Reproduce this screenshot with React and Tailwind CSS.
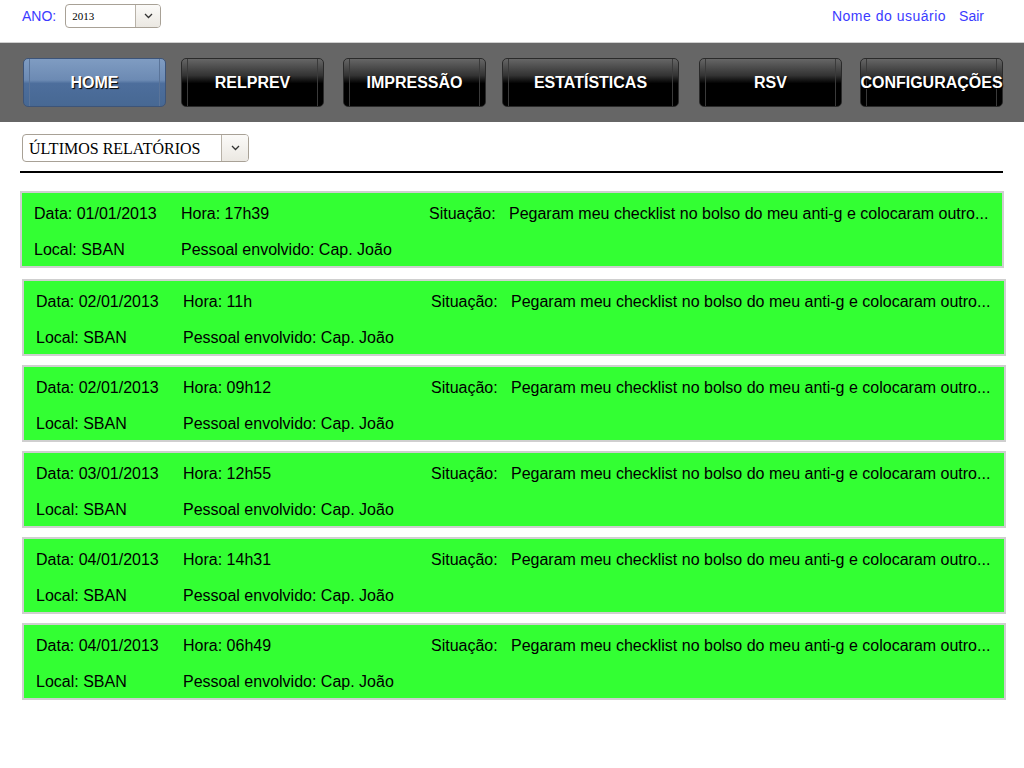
const MENU = [
  { label: "HOME", active: true, w: "w-[143px]", ml: "" },
  { label: "RELPREV", w: "w-[143px]", ml: "ml-[15px]" },
  { label: "IMPRESSÃO", w: "w-[143px]", ml: "ml-[19px]" },
  { label: "ESTATÍSTICAS", w: "w-[177px]", ml: "ml-[16px]" },
  { label: "RSV", w: "w-[143px]", ml: "ml-[20px]" },
  { label: "CONFIGURAÇÕES", w: "w-[143px]", ml: "ml-[18px]" },
]

const REPORTS = [
  { data: "01/01/2013", hora: "17h39" },
  { data: "02/01/2013", hora: "11h" },
  { data: "02/01/2013", hora: "09h12" },
  { data: "03/01/2013", hora: "12h55" },
  { data: "04/01/2013", hora: "14h31" },
  { data: "04/01/2013", hora: "06h49" },
]

function Chevron() {
  return (
    <svg width="9" height="6" viewBox="0 0 9 6" fill="none">
      <path d="M1 1l3.5 3.5L8 1" stroke="#333" strokeWidth="1.3" />
    </svg>
  )
}

function FakeSelect({ value, className, textClass, arrowW }) {
  return (
    <div className={`flex border border-[#a8a196] rounded-[4px] bg-white overflow-hidden ${className}`}>
      <div className={`flex-1 flex items-center pl-1.5 text-black font-['Liberation_Serif',serif] ${textClass}`}>
        {value}
      </div>
      <div className={`${arrowW} flex items-center justify-center border-l border-[#b8b2a8] bg-[linear-gradient(to_bottom,#fbfaf8,#ebe8e2)]`}>
        <Chevron />
      </div>
    </div>
  )
}

function MenuButton({ label, active, w, ml }) {
  const bg = active
    ? "bg-[linear-gradient(to_bottom,#7f9cc2_0%,#6c8ab3_45%,#4d6e9c_52%,#476893_100%)] border-[#3d5478]"
    : "bg-[linear-gradient(to_bottom,#666_0%,#333_35%,#000_52%,#000_100%)] border-[#2a2a2a]"
  return (
    <div className={`relative ${w} ${ml} shrink-0 h-[49px] rounded-[5px] border ${bg} flex items-center justify-center`}>
      <span className={`absolute left-[5px] top-0 bottom-0 w-px ${active ? "bg-[#5a7499]" : "bg-[#3a3a3a]"}`} />
      <span className={`absolute right-[5px] top-0 bottom-0 w-px ${active ? "bg-[#5a7499]" : "bg-[#3a3a3a]"}`} />
      <span className="relative text-white font-bold text-[16px] whitespace-nowrap [text-shadow:1px_1px_1px_#000]">
        {label}
      </span>
    </div>
  )
}

function ReportCard({ data, hora, first }) {
  return (
    <div className={`${first ? "ml-[20px]" : "ml-[22px]"} w-[984px] h-[77px] border-2 border-[#cfcfcf] bg-[#33ff33] pl-[12px] pt-[12px] flex flex-col gap-[18px] text-[16px] leading-[18px] text-black`}>
      <div className="flex">
        <span className="w-[147px]">Data: {data}</span>
        <span className="w-[248px]">Hora: {hora}</span>
        <span className="w-[80px]">Situação:</span>
        <span className="whitespace-nowrap">Pegaram meu checklist no bolso do meu anti-g e colocaram outro...</span>
      </div>
      <div className="flex">
        <span className="w-[147px]">Local: SBAN</span>
        <span>Pessoal envolvido: Cap. João</span>
      </div>
    </div>
  )
}

export default function App() {
  return (
    <div className="w-[1024px] h-[768px] bg-white font-['Liberation_Sans',Arial,sans-serif] overflow-hidden">

      {/* Top row */}
      <div className="h-[42px] flex items-start justify-between pt-[4px]">
        <div className="flex items-center pl-[22px]">
          <span className="text-[14px] text-[#3b3bff] mr-[9px]">ANO:</span>
          <FakeSelect value="2013" className="w-[96px] h-[24px]" textClass="text-[11px]" arrowW="w-[25px]" />
        </div>
        <div className="flex items-center h-[24px] pr-[40px] text-[14px] text-[#3b3bff] gap-[13px]">
          <span className="tracking-[0.5px]">Nome do usuário</span>
          <span>Sair</span>
        </div>
      </div>

      {/* Menu bar */}
      <div className="h-[80px] bg-[#666666] border-t border-[#cfcfcf] flex items-start pl-[23px] pt-[15px]">
        {MENU.map(m => (
          <MenuButton key={m.label} {...m} />
        ))}
      </div>

      {/* Filter */}
      <div className="pt-[12px] pl-[22px]">
        <FakeSelect value="ÚLTIMOS RELATÓRIOS" className="w-[227px] h-[28px]" textClass="text-[16px] pt-px" arrowW="w-[27px]" />
      </div>
      <div className="ml-[20px] w-[983px] h-[2px] bg-black mt-[9px]" />

      {/* Reports */}
      <div className="mt-[18px] flex flex-col">
        {REPORTS.map((r, i) => (
          <div key={i} className={i === 0 ? "" : i === 1 ? "mt-[11px]" : "mt-[9px]"}>
            <ReportCard {...r} first={i === 0} />
          </div>
        ))}
      </div>

    </div>
  )
}
